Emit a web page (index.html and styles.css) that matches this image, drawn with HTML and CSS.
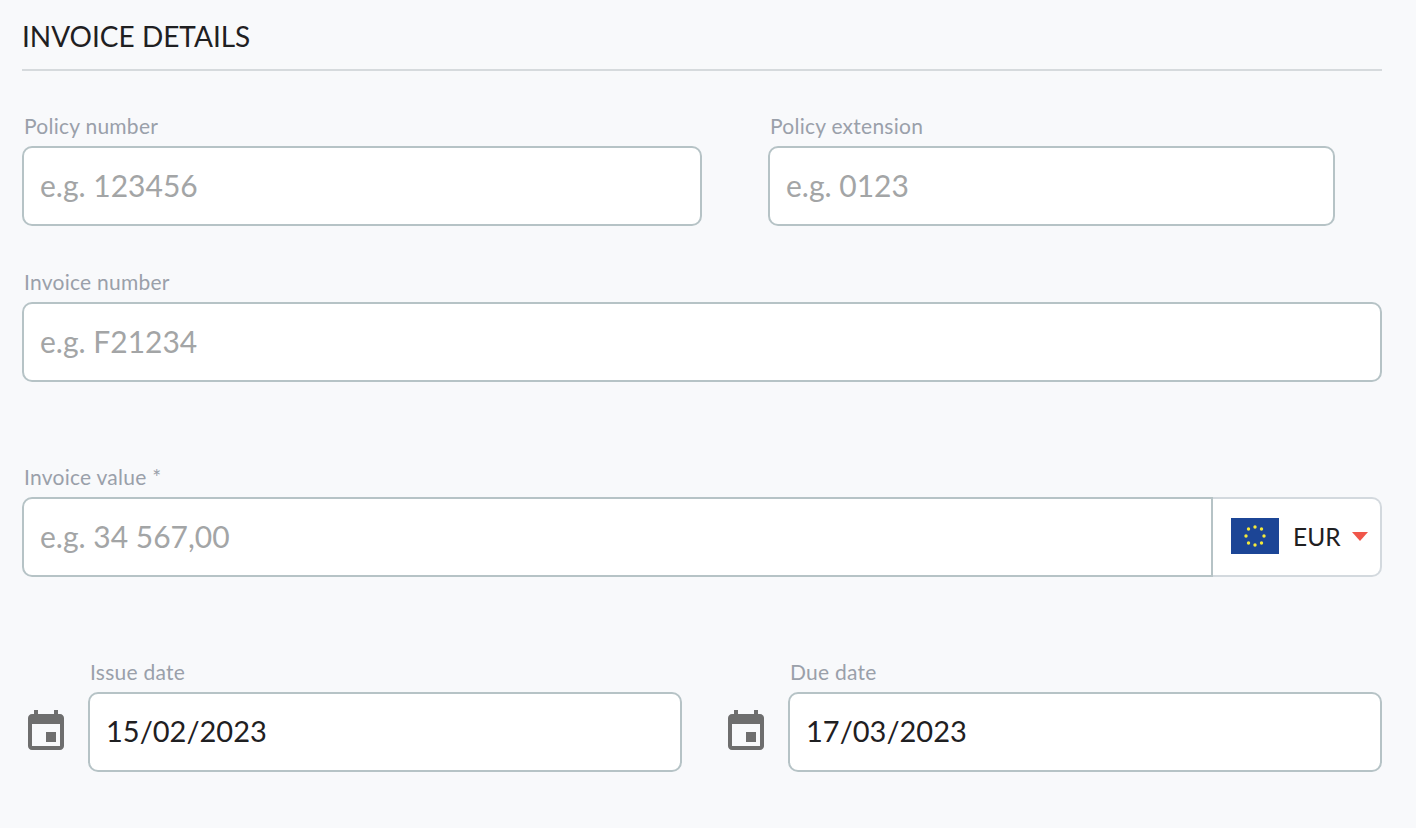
FILE: index.html
```html
<!DOCTYPE html>
<html lang="en">
<head>
    <meta charset="UTF-8">
    <meta name="viewport" content="width=device-width, initial-scale=1.0">
    <title>Invoice Details</title>
    <link rel="stylesheet" href="styles.css">
</head>
<body>
<h1 class="section-title">INVOICE DETAILS</h1>

<form class="invoice-form">
    <!-- Policy -->
    <div class="row row-policy">
        <div class="field field-number">
            <label for="policy">Policy number</label>
            <input type="text" id="policy" placeholder="e.g. 123456">
        </div>
        <div class="field field-extension">
            <label for="extension">Policy extension</label>
            <input type="text" id="extension" placeholder="e.g. 0123">
        </div>
    </div>

    <!-- Invoice number -->
    <div class="row row-invoice">
        <div class="field">
            <label for="invoice">Invoice number</label>
            <input type="text" id="invoice" placeholder="e.g. F21234">
        </div>
    </div>

    <!-- Value and currency -->
    <div class="row row-value">
        <div class="field">
            <label for="value">Invoice value *</label>
            <div class="value-group">
                <input type="text" id="value" placeholder="e.g. 34 567,00">
                <div class="currency">
                    <svg class="flag" viewBox="0 0 48 36" width="48" height="36">
                        <rect width="48" height="36" fill="#1c4596"/>
                        <g fill="#f4e93a">
                            <circle cx="24" cy="9" r="1.7"/>
                            <circle cx="30.5" cy="11" r="1.7"/>
                            <circle cx="33" cy="18" r="1.7"/>
                            <circle cx="30.5" cy="25" r="1.7"/>
                            <circle cx="24" cy="27" r="1.7"/>
                            <circle cx="17.5" cy="25" r="1.7"/>
                            <circle cx="15" cy="18" r="1.7"/>
                            <circle cx="17.5" cy="11" r="1.7"/>
                        </g>
                    </svg>
                    <span class="currency-code">EUR</span>
                    <span class="caret"></span>
                </div>
            </div>
        </div>
    </div>

    <!-- Dates -->
    <div class="row row-dates">
        <div class="date-field">
            <svg class="calendar" viewBox="0 0 24 24" width="48" height="48"><path d="M17 12h-5v5h5v-5zM16 1v2H8V1H6v2H5c-1.11 0-1.99.9-1.99 2L3 19c0 1.1.89 2 2 2h14c1.1 0 2-.9 2-2V5c0-1.1-.9-2-2-2h-1V1h-2zm3 18H5V8h14v11z"/></svg>
            <div class="field">
                <label for="issue">Issue date</label>
                <input type="text" id="issue" value="15/02/2023">
            </div>
        </div>
        <div class="date-field">
            <svg class="calendar" viewBox="0 0 24 24" width="48" height="48"><path d="M17 12h-5v5h5v-5zM16 1v2H8V1H6v2H5c-1.11 0-1.99.9-1.99 2L3 19c0 1.1.89 2 2 2h14c1.1 0 2-.9 2-2V5c0-1.1-.9-2-2-2h-1V1h-2zm3 18H5V8h14v11z"/></svg>
            <div class="field">
                <label for="due">Due date</label>
                <input type="text" id="due" value="17/03/2023">
            </div>
        </div>
    </div>
</form>
</body>
</html>
```

FILE: styles.css
```css
* {
    box-sizing: border-box;
}

html, body {
    height: 100%;
}

body {
    margin: 0;
    padding: 0 34px 0 22px;
    background-color: #f8f9fb;
    font-family: "Lato", "Noto Sans", sans-serif;
    color: #1f2022;
    overflow: hidden;
}

.section-title {
    margin: 0;
    height: 71px;
    padding-top: 19px;
    border-bottom: 2px solid #d6dadd;
    font-size: 28px;
    line-height: 34px;
    font-weight: 400;
}

/* Rows */
.row {
    display: flex;
}

.row-policy {
    margin-top: 43px;
    gap: 66px;
    padding-right: 47px;
}

.row-invoice {
    margin-top: 44px;
}

.row-value {
    margin-top: 83px;
}

.row-dates {
    margin-top: 83px;
    gap: 40px;
}

/* Fields */
.field {
    flex: 1;
    min-width: 0;
}

.field-number {
    flex: 0 0 680px;
}

.field label {
    display: block;
    height: 32px;
    padding-left: 2px;
    font-size: 21px;
    line-height: 23px;
    letter-spacing: 0.25px;
    color: #9aa0aa;
}

.field input {
    display: block;
    width: 100%;
    height: 80px;
    padding: 0 16px 2px;
    border: 2px solid #b6c3c6;
    border-radius: 10px;
    background-color: #fff;
    font-family: inherit;
    font-size: 30px;
    color: #1f2022;
    outline: none;
}

.field input::placeholder {
    color: #a3a5a6;
    opacity: 1;
}

/* Value with currency */
.value-group {
    display: flex;
}

.value-group input {
    flex: 1;
    min-width: 0;
    border-radius: 10px 0 0 10px;
}

.currency {
    flex: 0 0 169px;
    height: 80px;
    display: flex;
    align-items: center;
    padding: 0 0 2px 18px;
    border: 2px solid #d3d9de;
    border-left: 0;
    border-radius: 0 10px 10px 0;
    background-color: #fff;
}

.currency-code {
    margin-left: 14px;
    font-size: 24.5px;
}

.caret {
    margin-left: 11px;
    width: 0;
    height: 0;
    border-left: 8px solid transparent;
    border-right: 8px solid transparent;
    border-top: 9px solid #f0564a;
}

/* Dates */
.date-field {
    flex: 1;
    display: flex;
    align-items: flex-end;
    gap: 18px;
}

.date-field input {
    padding-bottom: 4px;
    font-size: 29px;
}

.calendar {
    flex: none;
    margin-bottom: 16px;
    fill: #6e6e6e;
}
```
